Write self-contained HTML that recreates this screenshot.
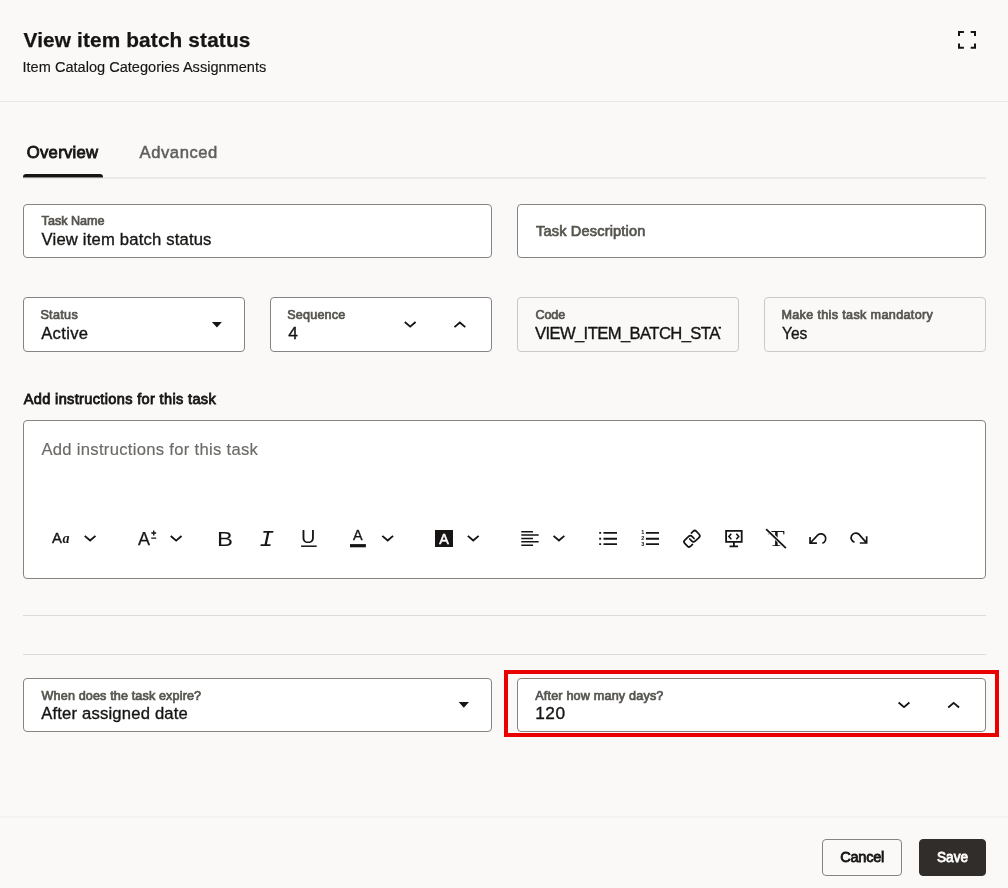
<!DOCTYPE html>
<html lang="en">
<head>
<meta charset="utf-8">
<title>View item batch status</title>
<style>
html,body{margin:0;padding:0;}
body{width:1008px;height:888px;overflow:hidden;background:#fbf9f8;font-family:"Liberation Sans",Arial,sans-serif;color:#161513;position:relative;}
.t{position:absolute;white-space:nowrap;line-height:1;}
.hline{position:absolute;height:1px;background:#dedcda;}
.box{position:absolute;box-sizing:border-box;border:1px solid #868482;border-radius:4px;background:#fff;}
.box.ro{border-color:#cbc9c7;background:#fbf9f8;}
svg{position:absolute;overflow:visible;}
</style>
</head>
<body>
<div id="root" style="position:absolute;left:0;top:0;width:1008px;height:888px;will-change:transform;">
<!-- header -->
<div class="hline" style="left:0;top:101px;width:1008px;background:#e8e6e4;"></div>
<svg style="left:0;top:0" width="1008" height="100"><path d="M959,36.1V32H963.9 M970.7,32H975V36.1 M975,43.5V47.7H970.7 M963.9,47.7H959V43.5" fill="none" stroke="#161513" stroke-width="2"/></svg>

<!-- tabs -->
<div class="hline" style="left:23px;top:177px;width:963px;height:2px;background:#ebe9e7;"></div>
<div style="position:absolute;left:23px;top:174px;width:79.5px;height:4px;background:linear-gradient(#161513 0,#161513 3px,#8a8987 3px);border-radius:3px 3px 0 0;"></div>

<!-- row 1 -->
<div class="box" style="left:23px;top:204px;width:469px;height:54px;"></div>
<div class="box" style="left:517px;top:204px;width:469px;height:54px;"></div>

<!-- row 2 -->
<div class="box" style="left:23px;top:297px;width:222px;height:55px;"></div>
<div class="box" style="left:270px;top:297px;width:222px;height:55px;"></div>
<div class="box ro" style="left:517px;top:297px;width:222px;height:55px;"></div>
<div class="box ro" style="left:764px;top:297px;width:222px;height:55px;"></div>

<!-- editor -->
<div class="box" style="left:23px;top:420px;width:963px;height:159px;"></div>

<div class="hline" style="left:23px;top:615px;width:963px;"></div>
<div class="hline" style="left:23px;top:654px;width:963px;"></div>

<!-- row 3 -->
<div class="box" style="left:23px;top:678px;width:469px;height:54px;"></div>
<div style="position:absolute;left:504px;top:670px;width:495px;height:67px;box-sizing:border-box;border:4px solid #e90000;"></div>
<div class="box" style="left:517px;top:678px;width:469px;height:54px;"></div>

<!-- footer -->
<div class="hline" style="left:0;top:816px;width:1008px;height:2px;background:#f5f3f1;"></div>
<div class="box" style="left:822px;top:839px;width:80px;height:37px;background:transparent;"></div>
<div class="box" style="left:919px;top:839px;width:67px;height:37px;background:#312d2a;border-color:#312d2a;"></div>

<!-- texts -->
<div class="t" style="left:23.5px;top:30px;font-size:20.8px;font-weight:bold;letter-spacing:0.143px;-webkit-text-stroke:0.25px;">View item batch status</div>
<div class="t" style="left:22.5px;top:60px;font-size:14.56px;letter-spacing:0.012px;-webkit-text-stroke:0.15px;">Item Catalog Categories Assignments</div>
<div class="t" style="left:26.8px;top:145px;font-size:16.64px;letter-spacing:0.286px;-webkit-text-stroke:0.85px;">Overview</div>
<div class="t" style="left:139.6px;top:145px;font-size:16.64px;color:#5f5d5a;letter-spacing:0.543px;-webkit-text-stroke:0.5px;">Advanced</div>
<div class="t" style="left:41.6px;top:215px;font-size:12.6px;color:#56544f;-webkit-text-stroke:0.7px;">Task Name</div>
<div class="t" style="left:41.6px;top:232px;font-size:16.64px;letter-spacing:0.181px;-webkit-text-stroke:0.35px;">View item batch status</div>
<div class="t" style="left:536.0px;top:224px;font-size:14.56px;color:#56544f;letter-spacing:0.174px;-webkit-text-stroke:0.7px;">Task Description</div>
<div class="t" style="left:40.4px;top:309px;font-size:12.6px;color:#56544f;letter-spacing:0.320px;-webkit-text-stroke:0.7px;">Status</div>
<div class="t" style="left:41.2px;top:326px;font-size:16.64px;letter-spacing:0.320px;-webkit-text-stroke:0.35px;">Active</div>
<div class="t" style="left:287.3px;top:309px;font-size:12.6px;color:#56544f;letter-spacing:0.172px;-webkit-text-stroke:0.7px;">Sequence</div>
<div class="t" style="left:288.3px;top:325px;font-size:17.3px;-webkit-text-stroke:0.35px;">4</div>
<div class="t" style="left:535.5px;top:309px;font-size:12.6px;color:#56544f;letter-spacing:-0.133px;-webkit-text-stroke:0.7px;">Code</div>
<div class="t" style="left:781.4px;top:309px;font-size:12.6px;color:#56544f;letter-spacing:0.348px;-webkit-text-stroke:0.7px;">Make this task mandatory</div>
<div class="t" style="left:782.2px;top:326px;font-size:16.64px;transform:scaleX(0.9333);transform-origin:0 50%;-webkit-text-stroke:0.35px;">Yes</div>
<div class="t" style="left:23.8px;top:392px;font-size:14.56px;letter-spacing:0.345px;-webkit-text-stroke:0.8px;">Add instructions for this task</div>
<div class="t" style="left:41.4px;top:442px;font-size:16.64px;color:#6c6a67;letter-spacing:0.296px;-webkit-text-stroke:0.15px;">Add instructions for this task</div>
<div class="t" style="left:41.6px;top:690px;font-size:12.6px;color:#56544f;letter-spacing:0.136px;-webkit-text-stroke:0.7px;">When does the task expire?</div>
<div class="t" style="left:41.2px;top:706px;font-size:16.64px;letter-spacing:0.189px;-webkit-text-stroke:0.35px;">After assigned date</div>
<div class="t" style="left:535.2px;top:690px;font-size:12.6px;color:#56544f;letter-spacing:0.189px;-webkit-text-stroke:0.7px;">After how many days?</div>
<div class="t" style="left:535.2px;top:705px;font-size:17.3px;letter-spacing:0.500px;-webkit-text-stroke:0.35px;">120</div>
<div class="t" style="left:840.3px;top:850px;font-size:14.56px;letter-spacing:-0.280px;-webkit-text-stroke:0.8px;">Cancel</div>
<div class="t" style="left:937.0px;top:850px;font-size:14.56px;color:#fff;transform:scaleX(0.9364);transform-origin:0 50%;-webkit-text-stroke:0.8px;">Save</div>
<div class="t" style="left:534.9px;top:326px;width:186.1px;overflow:hidden;font-size:16.64px;letter-spacing:-0.6px;-webkit-text-stroke:0.35px;">VIEW_ITEM_BATCH_STATUS</div>

<!-- icons -->
<div class="t" style="left:767.6px;top:527px;font-size:23.5px;font-family:'Liberation Serif',serif;transform:scaleX(1.17);transform-origin:0 50%;">T</div>
<svg style="left:0;top:0" width="1008" height="888" viewBox="0 0 1008 888">
<path fill="#161513" d="M211.9,322.1H221.9L216.9,327.6Z M458.7,701.9H469L463.85,707.7Z"/>
<path fill="none" stroke="#161513" stroke-width="1.9" d="M404.80,322.00L410.20,326.60L415.60,322.00 M454.45,327.10L459.85,322.50L465.25,327.10 M898.60,702.50L904.00,707.10L909.40,702.50 M948.25,707.50L953.65,702.90L959.05,707.50 M84.70,535.90L90.10,540.50L95.50,535.90 M170.75,536.00L176.15,540.60L181.55,536.00 M382.30,535.90L387.70,540.50L393.10,535.90 M467.85,535.90L473.25,540.50L478.65,535.90 M553.55,535.90L558.95,540.50L564.35,535.90"/>
<path fill="none" stroke="#161513" stroke-width="1.4" d="M151.3,533H156.2 M153.75,530.5V535.5 M151.3,538.1H156.2"/>
<path fill="none" stroke="#161513" stroke-width="1.5" d="M301.1,546.2H316.7"/>
<rect x="350" y="544.1" width="15.9" height="3.2" fill="#161513"/>
<rect x="435" y="530" width="18" height="17" fill="#161513"/>
<path fill="none" stroke="#161513" stroke-width="1.55" d="M521.3,531.75H533 M521.3,535H538.7 M521.3,538.4H533 M521.3,541.65H538.7 M521.3,545.2H533"/>
<path fill="none" stroke="#161513" stroke-width="1.9" d="M603.5,532.9H617 M603.5,538.75H617 M603.5,544.1H617 M599.2,532.9H601.1 M599.2,538.75H601.1 M599.2,544.1H601.1"/>
<path fill="none" stroke="#161513" stroke-width="1.9" d="M645.9,532.9H659 M645.9,538.75H659 M645.9,544.1H659"/>
<g transform="translate(691.9,538.76) rotate(-43.6) scale(0.93)" fill="none" stroke="#161513" stroke-width="1.85" stroke-linecap="round" stroke-linejoin="round"><path d="M3.8,-4.9H6.46a2.5,2.5 0 0 1 2.5,2.5V1.8a2.5,2.5 0 0 1 -2.5,2.5H0.66a2.5,2.5 0 0 1 -2.5,-2.5V-1.4"/><path transform="rotate(180)" d="M3.8,-4.9H6.46a2.5,2.5 0 0 1 2.5,2.5V1.8a2.5,2.5 0 0 1 -2.5,2.5H0.66a2.5,2.5 0 0 1 -2.5,-2.5V-1.4"/></g>
<path fill="none" stroke="#161513" stroke-width="1.8" d="M726.1,530.8H741.7V541.9H726.1Z M733.9,542V546.4 M729.5,546.4H738.1"/>
<path fill="none" stroke="#161513" stroke-width="1.6" d="M731.3,533.8L728.9,536.5L731.3,539.2 M736.3,533.8L738.7,536.5L736.3,539.2"/>
<path fill="none" stroke="#fff" stroke-width="3.6" d="M767.5,530.3L785,547"/>
<path fill="none" stroke="#161513" stroke-width="1.8" d="M766.1,529.2L785.9,548.2"/>
<path fill="none" stroke="#161513" stroke-width="1.7" d="M810.05,536.9V543.15H816.9 M810.2,543L817.9,534.9A4.8,4.8 0 1 1 822.3,543.2"/>
<path fill="none" stroke="#161513" stroke-width="1.7" d="M866.65,536.3V543H859.8 M866.5,542.85L858.62,534.0A4.7,4.7 0 1 0 854.54,542.3"/>
</svg>
<div class="t" style="left:51.9px;top:531.4px;font-size:14.9px;-webkit-text-stroke:0.4px;">A</div>
<div class="t" style="left:62.5px;top:531.5px;font-size:14px;font-family:'Liberation Serif',serif;font-style:italic;font-weight:bold;">a</div>
<div class="t" style="left:138px;top:529.5px;font-size:18px;-webkit-text-stroke:0.25px;">A</div>
<div class="t" style="left:217.3px;top:528.5px;font-size:20.5px;transform:scale(1.17,1.03);transform-origin:0 100%;">B</div>
<div class="t" style="left:259.8px;top:530px;font-size:22px;font-family:'Liberation Mono',monospace;font-style:italic;transform:scaleX(1.12);transform-origin:55% 50%;">I</div>
<div class="t" style="left:300.7px;top:529px;font-size:17.7px;transform:scaleX(1.13);transform-origin:0 0;">U</div>
<div class="t" style="left:353px;top:528px;font-size:14.4px;-webkit-text-stroke:0.35px #161513;">A</div>
<div class="t" style="left:439.3px;top:531.5px;font-size:14.4px;color:#fff;-webkit-text-stroke:0.5px #fff;">A</div>
<div class="t" style="left:641.2px;top:530.3px;font-size:5.5px;font-weight:bold;">1</div>
<div class="t" style="left:641.2px;top:536.1px;font-size:5.5px;font-weight:bold;">2</div>
<div class="t" style="left:641.2px;top:541.5px;font-size:5.5px;font-weight:bold;">3</div>
</div>
</body>
</html>
